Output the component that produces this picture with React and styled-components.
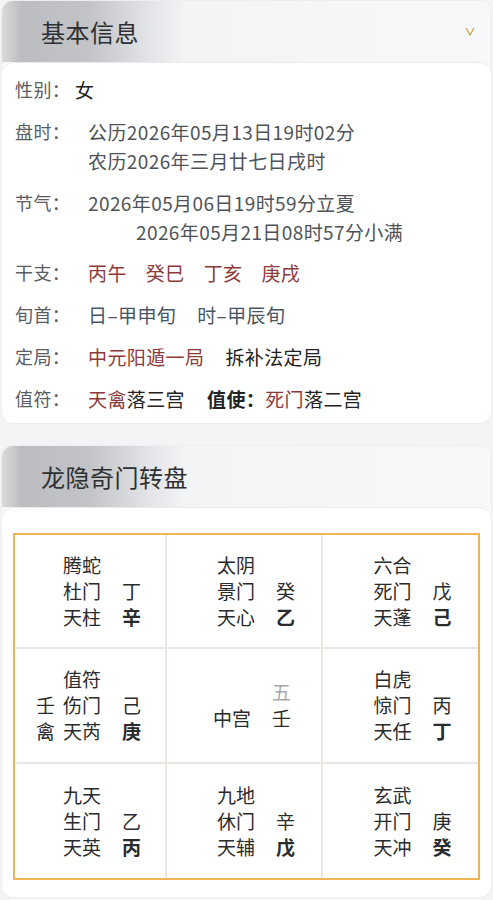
import React from "react";
import styled, { createGlobalStyle } from "styled-components";

const Global = createGlobalStyle`
  html, body { margin: 0; padding: 0; background: #f3f4f6; }
  body { font-family: "Noto Sans CJK SC", "Noto Sans", sans-serif; }
  * { box-sizing: border-box; }
`;

const Page = styled.div`
  display: flex;
  flex-direction: column;
  gap: 21px;
  padding: 0 1px;
`;

const Section = styled.section`
  display: flex;
  flex-direction: column;
  border-radius: 12px;
  background: #f7f8fa;
  border: 1px solid #eceef1;
  overflow: hidden;
`;

const Header = styled.div`
  height: 61px;
  display: flex;
  align-items: center;
  justify-content: space-between;
  padding: 0 16px 0 39px;
  background: linear-gradient(
    90deg,
    #d9dadc 0%,
    #bbbdc0 4%,
    #c2c4c7 18%,
    #e3e4e7 30%,
    #f3f4f6 38%,
    #f7f8fa 100%
  );
`;

const Title = styled.h2`
  margin: 0;
  font-size: 24px;
  font-weight: 400;
  color: #2e2f31;
  letter-spacing: 0.5px;
`;

const Body = styled.div`
  background: #ffffff;
  border-radius: 12px;
  border-top: 1px solid #e9eaed;
  padding: ${(p) => p.$pad};
  display: flex;
  flex-direction: column;
  gap: ${(p) => p.$gap || "0"};
`;

const Row = styled.div`
  display: flex;
  align-items: flex-start;
  font-size: 19px;
  line-height: 29px;
  letter-spacing: 0.4px;
`;

const Label = styled.div`
  width: ${(p) => p.$w || "73px"};
  flex-shrink: 0;
  color: #5a5d62;
  font-size: 18px;
`;

const Value = styled.div`
  display: flex;
  flex-direction: column;
  color: ${(p) => p.$color || "#222"};
`;

const Line = styled.div`
  padding-left: ${(p) => p.$indent || "0"};
`;

const Items = styled.div`
  display: flex;
  gap: ${(p) => p.$gap || "18px"};
`;

const T = styled.span`
  color: ${(p) =>
    p.$tone === "red" ? "#8c3a3a" : p.$tone === "slate" ? "#4a5564" : "#222"};
  font-weight: ${(p) => (p.$bold ? 700 : 400)};
`;

const Board = styled.div`
  display: grid;
  grid-template-columns: 153fr 157fr 156fr;
  grid-template-rows: 114px 115px 114px;
  border: 2px solid #f0b552;
`;

const Cell = styled.div`
  display: flex;
  align-items: center;
  justify-content: center;
  padding-right: ${(p) => (p.$center ? "12px" : "4px")};
  border-right: ${(p) => (p.$lastCol ? "none" : "2px solid #ece7e2")};
  border-bottom: ${(p) => (p.$lastRow ? "none" : "2px solid #ece7e2")};
`;

const CellGrid = styled.div`
  display: grid;
  grid-template-columns: 27px 59px 18px;
  font-size: 19px;
  line-height: 26px;
  color: #2a2b2d;
`;

const C = styled.span`
  font-weight: ${(p) => (p.$bold ? 700 : 400)};
  color: ${(p) => (p.$muted ? "#a9a9ab" : "inherit")};
  white-space: nowrap;
`;

const Chevron = () => (
  <svg width="10" height="9" viewBox="0 0 10 9" fill="none">
    <polyline points="1,1 5,8 9,1" stroke="#c9a043" strokeWidth="1.2" />
  </svg>
);

const palaces = [
  { god: "腾蛇", door: "杜门", s1: "丁", star: "天柱", s2: "辛" },
  { god: "太阴", door: "景门", s1: "癸", star: "天心", s2: "乙" },
  { god: "六合", door: "死门", s1: "戊", star: "天蓬", s2: "己" },
  { god: "值符", door: "伤门", s1: "己", star: "天芮", s2: "庚", a1: "壬", a2: "禽" },
  { center: true },
  { god: "白虎", door: "惊门", s1: "丙", star: "天任", s2: "丁" },
  { god: "九天", door: "生门", s1: "乙", star: "天英", s2: "丙" },
  { god: "九地", door: "休门", s1: "辛", star: "天辅", s2: "戊" },
  { god: "玄武", door: "开门", s1: "庚", star: "天冲", s2: "癸" },
];

export default function App() {
  return (
    <>
      <Global />
      <Page>
        <Section>
          <Header>
            <Title>基本信息</Title>
            <Chevron />
          </Header>
          <Body $pad="12px 15px 10px 13px" $gap="12.8px">
            <Row>
              <Label $w="60px">性别：</Label>
              <Value>女</Value>
            </Row>
            <Row>
              <Label>盘时：</Label>
              <Value $color="#4f5359">
                <Line>公历2026年05月13日19时02分</Line>
                <Line>农历2026年三月廿七日戌时</Line>
              </Value>
            </Row>
            <Row>
              <Label>节气：</Label>
              <Value $color="#4f5359">
                <Line>2026年05月06日19时59分立夏</Line>
                <Line $indent="48px">2026年05月21日08时57分小满</Line>
              </Value>
            </Row>
            <Row>
              <Label>干支：</Label>
              <Items $gap="19px">
                <T $tone="red">丙午</T>
                <T $tone="red">癸巳</T>
                <T $tone="red">丁亥</T>
                <T $tone="red">庚戌</T>
              </Items>
            </Row>
            <Row>
              <Label>旬首：</Label>
              <Items $gap="21px">
                <T $tone="slate">日–甲申旬</T>
                <T $tone="slate">时–甲辰旬</T>
              </Items>
            </Row>
            <Row>
              <Label>定局：</Label>
              <Items $gap="21px">
                <T $tone="red">中元阳遁一局</T>
                <T>拆补法定局</T>
              </Items>
            </Row>
            <Row>
              <Label>值符：</Label>
              <Items $gap="22px">
                <span>
                  <T $tone="red">天禽</T>
                  <T>落三宫</T>
                </span>
                <span>
                  <T $bold>值使：</T>
                  <T $tone="red">死门</T>
                  <T>落二宫</T>
                </span>
              </Items>
            </Row>
          </Body>
        </Section>

        <Section>
          <Header>
            <Title>龙隐奇门转盘</Title>
          </Header>
          <Body $pad="25px 11px 17px">
            <Board>
              {palaces.map((p, i) => (
                <Cell key={i} $lastCol={i % 3 === 2} $lastRow={i >= 6} $center={p.center}>
                  {p.center ? (
                    <CellGrid>
                      <C />
                      <C />
                      <C $muted>五</C>
                      <C />
                      <C>中宫</C>
                      <C>壬</C>
                    </CellGrid>
                  ) : (
                    <CellGrid>
                      <C />
                      <C>{p.god}</C>
                      <C />
                      <C>{p.a1}</C>
                      <C>{p.door}</C>
                      <C>{p.s1}</C>
                      <C>{p.a2}</C>
                      <C>{p.star}</C>
                      <C $bold>{p.s2}</C>
                    </CellGrid>
                  )}
                </Cell>
              ))}
            </Board>
          </Body>
        </Section>
      </Page>
    </>
  );
}
